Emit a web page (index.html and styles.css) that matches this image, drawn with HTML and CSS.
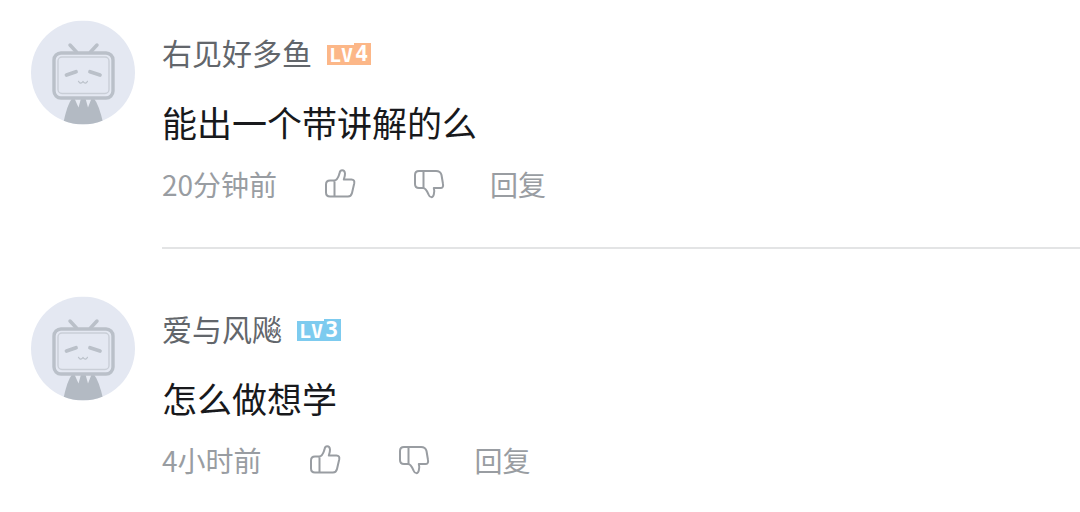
FILE: index.html
```html
<!DOCTYPE html>
<html lang="zh-CN">
<head>
<meta charset="utf-8">
<meta name="viewport" content="width=device-width, initial-scale=1">
<title>评论</title>
<link rel="stylesheet" href="styles.css">
</head>
<body>
<svg class="sprite" aria-hidden="true">
  <defs>
    <clipPath id="round"><circle cx="52" cy="52" r="52"/></clipPath>
    <symbol id="avatar" viewBox="0 0 104 104">
      <g clip-path="url(#round)">
        <rect width="104" height="104" fill="#e4e8f2"/>
        <path d="M41 78H63Q68 84 72.500 104H32Q36 84 41 78Z" fill="#b3bac3"/>
        <path d="M43.500 78H50L47.500 87ZM54.500 78H60.500L57 87Z" fill="#e7ebf3"/>
        <g fill="none" stroke="#bac0c9" stroke-linecap="round" stroke-linejoin="round">
          <path d="M39 24.500L45.500 31.500M66 24.500L59.500 31.500" stroke-width="3.500"/>
          <rect x="23" y="32.500" width="59" height="45" rx="7" stroke-width="3.400" fill="#e4e8f2"/>
          <rect x="27" y="36.500" width="51" height="36.500" rx="4" stroke-width="1.400" stroke="#c9ced7"/>
          <path d="M35.500 54.500L45 51.300M59 51.300L69 54.500" stroke-width="3.800"/>
          <path d="M47.500 60.800Q49.500 64.500 52 61Q54.500 64.500 56.500 60.800" stroke-width="1.200"/>
        </g>
      </g>
    </symbol>
    <symbol id="like" viewBox="0 0 32 32">
      <path d="M10.500 12.500V28.500M6 12.500H10C13 12.500 14.500 9 15.500 5.500C16 1.200 20.500 1.200 21 5.500C21.100 7.500 20.500 9.500 19.800 11.500H27.500C29.800 11.500 30.700 13 30.200 15.500L28 25C27.400 27.500 26 28.500 24 28.500H6C3 28.500 2 27 2 24.500V16.500C2 14 3 12.500 6 12.500Z"/>
    </symbol>
    <symbol id="dislike" viewBox="0 0 32 32">
      <path d="M10.500 3V20M6 3H23C26 3 27.800 4.200 28.500 7L30 16C30.500 18.500 29.500 20 27.500 20H20.800C21.500 22 21.500 24 20.800 26.500C19.800 30.200 16.800 29.800 15.500 26.500C14.300 23.500 13 20 10 20H6C3 20 2 18.500 2 16V7C2 4.500 3 3 6 3Z"/>
    </symbol>
  </defs>
</svg>
<main class="comments">
  <article class="comment">
    <svg class="avatar" role="img" aria-label="头像"><use href="#avatar"/></svg>
    <div class="body">
      <header class="author">
        <span class="name">右见好多鱼</span>
        <span class="level level-4"><span class="lv">LV</span><span class="num">4</span></span>
      </header>
      <p class="text">能出一个带讲解的么</p>
      <footer class="meta">
        <time class="time">20分钟前</time>
        <button class="icon like" type="button" aria-label="点赞"><svg><use href="#like"/></svg></button>
        <button class="icon dislike" type="button" aria-label="点踩"><svg><use href="#dislike"/></svg></button>
        <button class="reply" type="button">回复</button>
      </footer>
    </div>
  </article>
  <article class="comment">
    <svg class="avatar" role="img" aria-label="头像"><use href="#avatar"/></svg>
    <div class="body">
      <header class="author">
        <span class="name">爱与风飚</span>
        <span class="level level-3"><span class="lv">LV</span><span class="num">3</span></span>
      </header>
      <p class="text">怎么做想学</p>
      <footer class="meta">
        <time class="time">4小时前</time>
        <button class="icon like" type="button" aria-label="点赞"><svg><use href="#like"/></svg></button>
        <button class="icon dislike" type="button" aria-label="点踩"><svg><use href="#dislike"/></svg></button>
        <button class="reply" type="button">回复</button>
      </footer>
    </div>
  </article>
</main>
</body>
</html>
```
FILE: styles.css
```css
* {
  box-sizing: border-box;
}

body {
  margin: 0;
  background: #fff;
  font-family: "Noto Sans CJK SC", sans-serif;
}

.sprite {
  position: absolute;
  width: 0;
  height: 0;
}

.comment {
  display: flex;
  align-items: flex-start;
  gap: 27px;
  padding: 20px 0 0 31px;
}

.comment + .comment {
  padding-top: 47px;
}

.avatar {
  flex: none;
  width: 104px;
  height: 105px;
}

.body {
  flex: 1;
  padding: 14px 0 47px;
}

.comment:not(:last-child) .body {
  border-bottom: 2px solid #e3e4e5;
}

.author {
  display: flex;
  align-items: flex-end;
  gap: 15px;
  height: 36px;
}

.name {
  color: #62666b;
  font-size: 30px;
  line-height: 36px;
}

.level {
  display: flex;
  align-items: flex-end;
  padding-bottom: 5px;
  color: #fff;
  font-family: "DejaVu Sans Mono", monospace;
  font-weight: bold;
  font-size: 20px;
  line-height: 20px;
}

.lv {
  width: 27px;
  padding-left: 2px;
}

.num {
  width: 17px;
  padding-left: 1px;
  font-size: 22px;
  line-height: 22px;
}

.level-4 span {
  background: #fcb788;
}

.level-3 span {
  background: #7dcbef;
}

.text {
  margin: 28px 0 22px;
  color: #18191c;
  font-size: 35px;
  line-height: 48px;
}

.meta {
  display: flex;
  align-items: center;
  height: 32px;
  color: #999da2;
  font-size: 28px;
  line-height: 32px;
}

.icon,
.reply {
  padding: 0;
  border: 0;
  background: none;
  color: inherit;
  font: inherit;
  cursor: pointer;
}

.icon svg {
  display: block;
  width: 32px;
  height: 32px;
  fill: none;
  stroke: currentColor;
  stroke-width: 2;
  stroke-linejoin: round;
}

.like {
  margin-left: 47px;
}

.dislike {
  margin-left: 57px;
}

.reply {
  margin-left: 45px;
}
```
